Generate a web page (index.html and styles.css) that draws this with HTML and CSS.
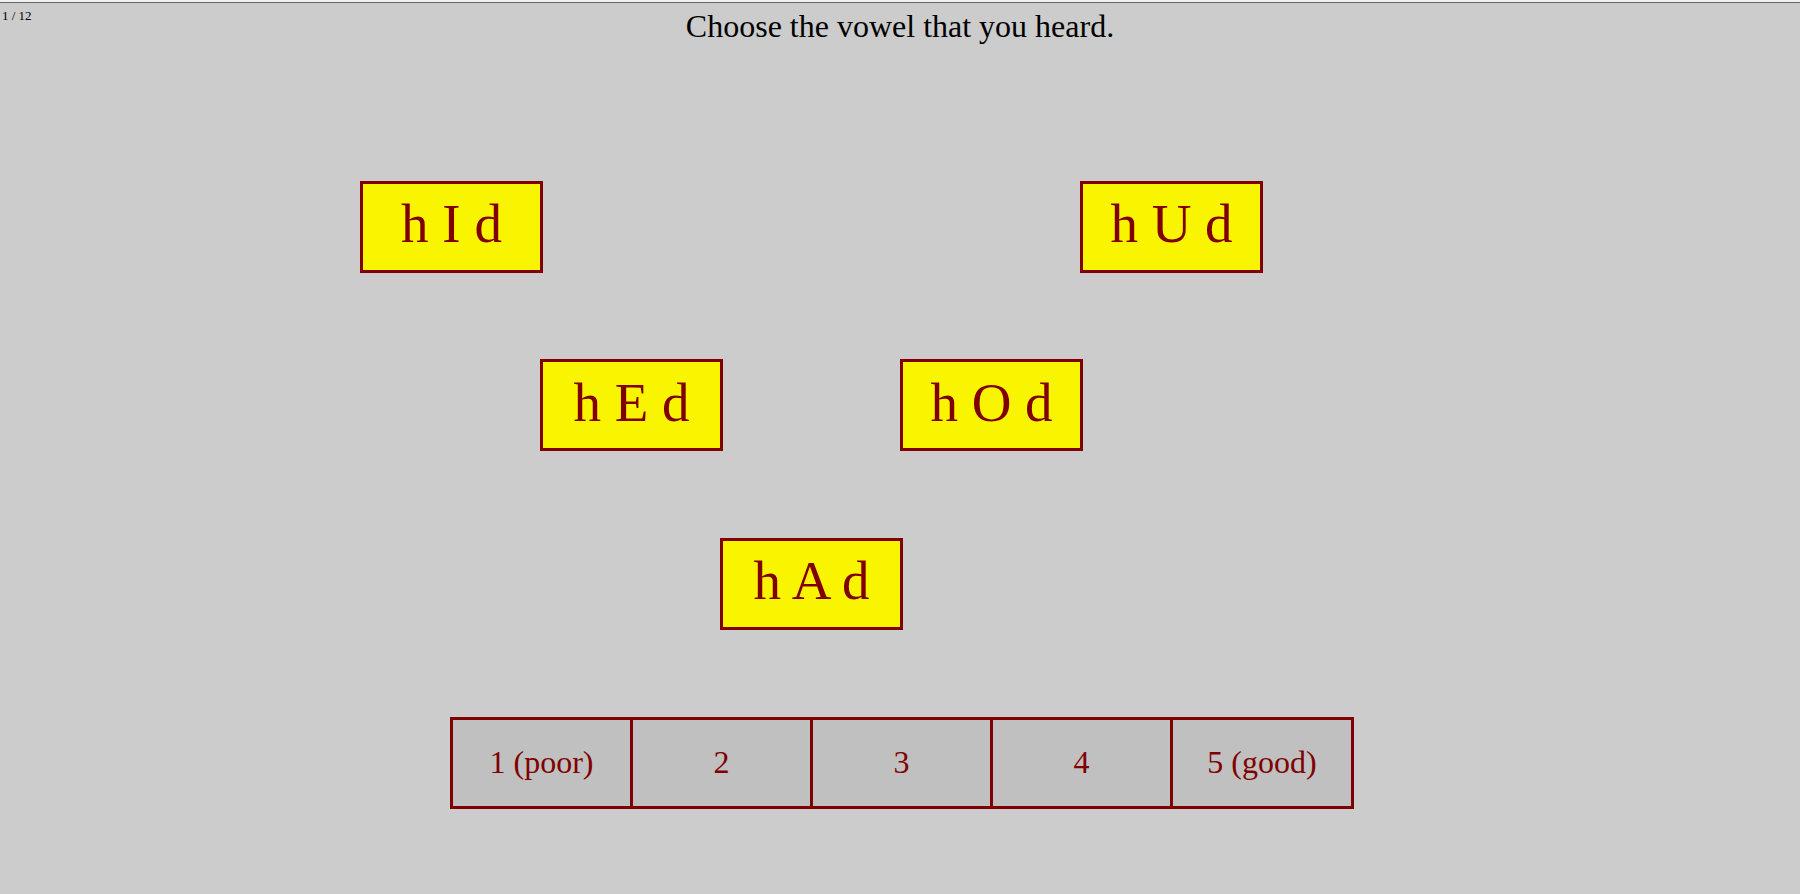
FILE: index.html
```html
<!DOCTYPE html>
<html lang="en">
<head>
  <meta charset="UTF-8">
  <title>Vowel test</title>
  <link rel="stylesheet" href="styles.css">
</head>
<body>
  <div class="stage">
    <header class="top">
      <span class="counter">1 / 12</span>
      <h1 class="prompt">Choose the vowel that you heard.</h1>
      <span></span>
    </header>

    <!-- vowel chart: each button sits in its own cell -->
    <button class="vowel v-i">h I d</button>
    <button class="vowel v-u">h U d</button>
    <button class="vowel v-e">h E d</button>
    <button class="vowel v-o">h O d</button>
    <button class="vowel v-a">h A d</button>

    <div class="rating">
      <button class="rate">1 (poor)</button>
      <button class="rate">2</button>
      <button class="rate">3</button>
      <button class="rate">4</button>
      <button class="rate">5 (good)</button>
    </div>
  </div>
</body>
</html>
```

FILE: styles.css
```css
/* base */
html {
  background: #f0f0f0;
  padding-top: 2px;
}
body {
  margin: 0;
  background: #cccccc;
  border-top: 1px solid #646464;
  font-family: 'Liberation Serif', 'Times New Roman', serif;
  color: #000;
}
button {
  font-family: inherit;
  cursor: pointer;
}

/* stage: 10 columns x 5 rows */
.stage {
  height: 891px;
  display: grid;
  grid-template-columns: repeat(10, 180px);
  grid-template-rows: repeat(5, 1fr);
}

/* header */
.top {
  grid-column: 1 / -1;
  grid-row: 1;
  display: grid;
  grid-template-columns: 1fr auto 1fr;
  align-items: start;
  padding-top: 5px;
}
.counter {
  font-size: 13px;
  padding-left: 2px;
}
.prompt {
  margin: 0;
  font-size: 32px;
  font-weight: normal;
}

/* vowel buttons */
.vowel {
  width: 183px;
  height: 92px;
  box-sizing: border-box;
  margin: 0;
  padding: 0 0 5px;
  background: #f9f500;
  border: 3px solid #800000;
  color: #800000;
  font-size: 55px;
  line-height: 1.1;
  white-space: pre;
}
.v-i { grid-column: 3; grid-row: 2; }
.v-u { grid-column: 7; grid-row: 2; }
.v-e { grid-column: 4; grid-row: 3; }
.v-o { grid-column: 6; grid-row: 3; }
.v-a { grid-column: 5; grid-row: 4; }

/* rating bar */
.rating {
  grid-column: 1 / -1;
  grid-row: 5;
  justify-self: start;
  align-self: start;
  margin-left: 450px;
  margin-top: 1px;
  display: flex;
  border: 3px solid #800000;
  border-left: none;
}
.rate {
  width: 180px;
  height: 86px;
  box-sizing: border-box;
  margin: 0;
  padding: 0;
  background: #c0c0c0;
  border: none;
  border-left: 3px solid #800000;
  color: #800000;
  font-size: 32px;
}
.rate:last-child {
  width: 181px;
}
```
